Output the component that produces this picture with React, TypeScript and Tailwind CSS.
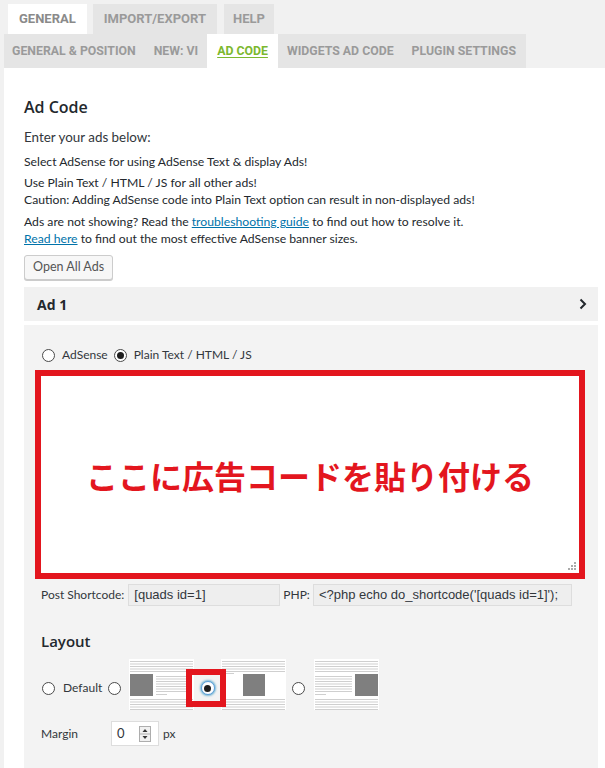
import React from "react";

const Radio = ({ checked = false, focus = false }: { checked?: boolean; focus?: boolean }) => (
  <span
    className={
      focus
        ? "inline-flex items-center justify-center w-[14px] h-[14px] rounded-full border border-[#5b9dd9] bg-white shadow-[0_0_2px_1px_rgba(30,140,190,0.6)] shrink-0"
        : "inline-flex items-center justify-center w-[13px] h-[13px] rounded-full border border-[#4a4a4a] bg-white shrink-0"
    }
  >
    {checked && <span className="w-[7px] h-[7px] rounded-full bg-[#1e1e1e]" />}
  </span>
);

const Lines = ({ x, y, w, n, step = 2.5 }: { x: number; y: number; w: number; n: number; step?: number }) => (
  <>
    {Array.from({ length: n }).map((_, i) => (
      <rect key={i} x={x} y={y + i * step} width={w} height={1} fill="#cfcfcf" />
    ))}
  </>
);

const LayoutImg = ({ variant }: { variant: "left" | "center" | "right" }) => (
  <svg width="65" height="51" viewBox="0 0 65 51" className="shrink-0 block">
    <rect x="0" y="0" width="65" height="51" fill="#fff" />
    <Lines x={1} y={2} w={63} n={5} />
    <Lines x={1} y={40} w={63} n={5} />
    {variant === "left" && (
      <>
        <rect x="1" y="15" width="23" height="22" fill="#7f7f7f" />
        <Lines x={27} y={17} w={36} n={7} />
        <rect x="27" y="35" width="11" height="1" fill="#cfcfcf" />
      </>
    )}
    {variant === "center" && (
      <>
        <rect x="1" y="14" width="12" height="1" fill="#cfcfcf" />
        <rect x="22" y="15" width="22" height="22" fill="#7f7f7f" />
      </>
    )}
    {variant === "right" && (
      <>
        <Lines x={1} y={17} w={37} n={7} />
        <rect x="1" y="35" width="11" height="1" fill="#cfcfcf" />
        <rect x="41" y="15" width="23" height="22" fill="#7f7f7f" />
      </>
    )}
  </svg>
);

export default function App() {
  const body = { fontFamily: "Lato, 'Liberation Sans', sans-serif" };
  return (
    <div className="min-h-[768px] w-[605px] bg-[#f1f1f1] overflow-hidden" style={body}>
      {/* Tab row 1 */}
      <div className="flex pt-[4px] pl-[8px] gap-[6px] h-[34px]" style={{ fontFamily: "Roboto, sans-serif" }}>
        <div className="h-[30px] px-[11px] flex items-center bg-white text-[13px] font-bold text-[#8a8a8a]">GENERAL</div>
        <div className="h-[30px] px-[11px] flex items-center bg-[#e5e5e5] text-[13px] font-bold text-[#9a9a9a]">IMPORT/EXPORT</div>
        <div className="h-[30px] px-[9px] flex items-center bg-[#e5e5e5] text-[13px] font-bold text-[#9a9a9a] ml-[1px]">HELP</div>
      </div>
      {/* Tab row 2 */}
      <div className="pl-[4px] flex" style={{ fontFamily: "Roboto, sans-serif" }}>
        <div className="flex h-[34px] bg-[#e5e5e5] text-[12.3px] font-bold text-[#9a9a9a] whitespace-nowrap">
          <div className="pl-[8px] pr-[9px] flex items-center shrink-0">GENERAL &amp; POSITION</div>
          <div className="px-[9px] flex items-center shrink-0">NEW: VI</div>
          <div className="px-[10px] flex items-center bg-white text-[#7cb82f] underline underline-offset-2 shrink-0">AD CODE</div>
          <div className="px-[9px] flex items-center shrink-0">WIDGETS AD CODE</div>
          <div className="pl-[9px] pr-[10px] flex items-center shrink-0">PLUGIN SETTINGS</div>
        </div>
      </div>
      {/* Main */}
      <div className="ml-[4px] bg-white pl-[20px] pr-[7px] pt-[29px] text-[#23282d] min-h-[700px]">
        <h2 className="text-[16px] font-semibold leading-[20px] text-[#23282d]" style={{ fontFamily: "'Open Sans', sans-serif" }}>Ad Code</h2>
        <p className="mt-[11px] text-[13.4px] leading-[18px] text-[#32373c]">Enter your ads below:</p>
        <p className="mt-[7px] text-[12.2px] leading-[17px] text-[#23282d]">Select AdSense for using AdSense Text &amp; display Ads!</p>
        <p className="mt-[4px] text-[12.2px] leading-[17px] text-[#23282d]">
          Use Plain Text / HTML / JS for all other ads!
          <br />
          Caution: Adding AdSense code into Plain Text option can result in non-displayed ads!
        </p>
        <p className="mt-[5px] text-[12.2px] leading-[17px] text-[#23282d]">
          Ads are not showing? Read the <span className="text-[#0073aa] underline">troubleshooting guide</span> to find out how to resolve it.
          <br />
          <span className="text-[#0073aa] underline">Read here</span> to find out the most effective AdSense banner sizes.
        </p>
        <button className="mt-[8px] h-[25px] px-[8px] text-[12.5px] text-[#555] bg-[#f7f7f7] border border-[#cccccc] rounded-[3px] shadow-[0_1px_0_#ccc]">
          Open All Ads
        </button>
        {/* Ad 1 header */}
        <div className="mt-[7px] h-[34px] bg-[#f1f1f1] flex items-center justify-between pl-[13px] pr-[10px]">
          <span className="text-[14px] font-bold text-[#23282d]" style={{ fontFamily: "'Open Sans', sans-serif" }}>Ad 1</span>
          <svg width="10" height="12" viewBox="0 0 10 12">
            <path d="M2.5 1.5 L7 6 L2.5 10.5" fill="none" stroke="#23282d" strokeWidth="2" />
          </svg>
        </div>
        {/* Panel */}
        <div className="mt-[4px] bg-[#f3f3f3] pt-[22px] pb-[40px]">
          <div className="flex items-center h-[16px] pl-[18px] text-[12px] text-[#32373c]">
            <Radio />
            <span className="ml-[7px]">AdSense</span>
            <span className="ml-[6px]"><Radio checked /></span>
            <span className="ml-[7px]">Plain Text / HTML / JS</span>
          </div>
          <div className="mt-[7px] ml-[11px] mr-[13px] h-[209px] border-[6px] border-[#e3161e] bg-white relative flex items-center justify-center">
            <span
              className="text-[32px] font-bold text-[#e3161e] tracking-[0px]"
              style={{ fontFamily: "'Noto Sans CJK JP', sans-serif" }}
            >
              ここに広告コードを貼り付ける
            </span>
            <svg className="absolute right-[2px] bottom-[2px]" width="9" height="9" viewBox="0 0 9 9">
              <rect x="6" y="0" width="2" height="2" fill="#aaa" />
              <rect x="3" y="3" width="2" height="2" fill="#aaa" />
              <rect x="6" y="3" width="2" height="2" fill="#aaa" />
              <rect x="0" y="6" width="2" height="2" fill="#aaa" />
              <rect x="3" y="6" width="2" height="2" fill="#aaa" />
              <rect x="6" y="6" width="2" height="2" fill="#aaa" />
            </svg>
          </div>
          <div className="mt-[5px] pl-[17px] flex items-center text-[12px] text-[#32373c]">
            <span>Post Shortcode:</span>
            <div className="ml-[4px] w-[152px] h-[22px] bg-[#eeeeee] border border-[#dddddd] flex items-center pl-[5px] text-[13px] text-[#32373c]" style={{ fontFamily: "'Liberation Sans', sans-serif" }}>
              [quads id=1]
            </div>
            <span className="ml-[3px]">PHP:</span>
            <div className="ml-[3px] w-[259px] h-[22px] bg-[#eeeeee] border border-[#dddddd] flex items-center pl-[5px] text-[13px] text-[#32373c] overflow-hidden whitespace-nowrap" style={{ fontFamily: "'Liberation Sans', sans-serif" }}>
              &lt;?php echo do_shortcode('[quads id=1]');
            </div>
          </div>
          <h3 className="mt-[25px] pl-[17px] text-[15px] font-semibold leading-[20px] text-[#23282d]" style={{ fontFamily: "'Open Sans', sans-serif" }}>
            Layout
          </h3>
          <div className="mt-[8px] pl-[18px] flex items-center text-[12px] text-[#32373c]">
            <span className="mt-[7px] flex"><Radio /></span>
            <span className="mt-[7px] ml-[8px]">Default</span>
            <span className="mt-[7px] ml-[6px] flex"><Radio /></span>
            <span className="ml-[8px]"><LayoutImg variant="left" /></span>
            <div className="relative mt-[7px] w-[27px] flex items-center justify-center">
              <div className="absolute left-[-8px] top-[-12px] w-[40px] h-[38px] border-[6px] border-[#e3161e]" />
              <Radio checked focus />
            </div>
            <LayoutImg variant="center" />
            <span className="mt-[7px] ml-[6px] flex"><Radio /></span>
            <span className="ml-[9px]"><LayoutImg variant="right" /></span>
          </div>
          <div className="mt-[11px] pl-[17px] flex items-center text-[12px] text-[#32373c]">
            <span className="w-[70px]">Margin</span>
            <div className="w-[48px] h-[25px] bg-white border border-[#dddddd] flex items-center pl-[5px] pr-[7px] justify-between">
              <span className="text-[13px]">0</span>
              <svg width="12" height="16" viewBox="0 0 12 16">
                <rect x="0.5" y="0.5" width="11" height="15" fill="#f0f0f0" stroke="#adadad" />
                <line x1="0.5" y1="8" x2="11.5" y2="8" stroke="#adadad" />
                <path d="M3.5 6 L6 3 L8.5 6 Z" fill="#333" />
                <path d="M3.5 10 L6 13 L8.5 10 Z" fill="#333" />
              </svg>
            </div>
            <span className="ml-[4px]">px</span>
          </div>
        </div>
      </div>
    </div>
  );
}
